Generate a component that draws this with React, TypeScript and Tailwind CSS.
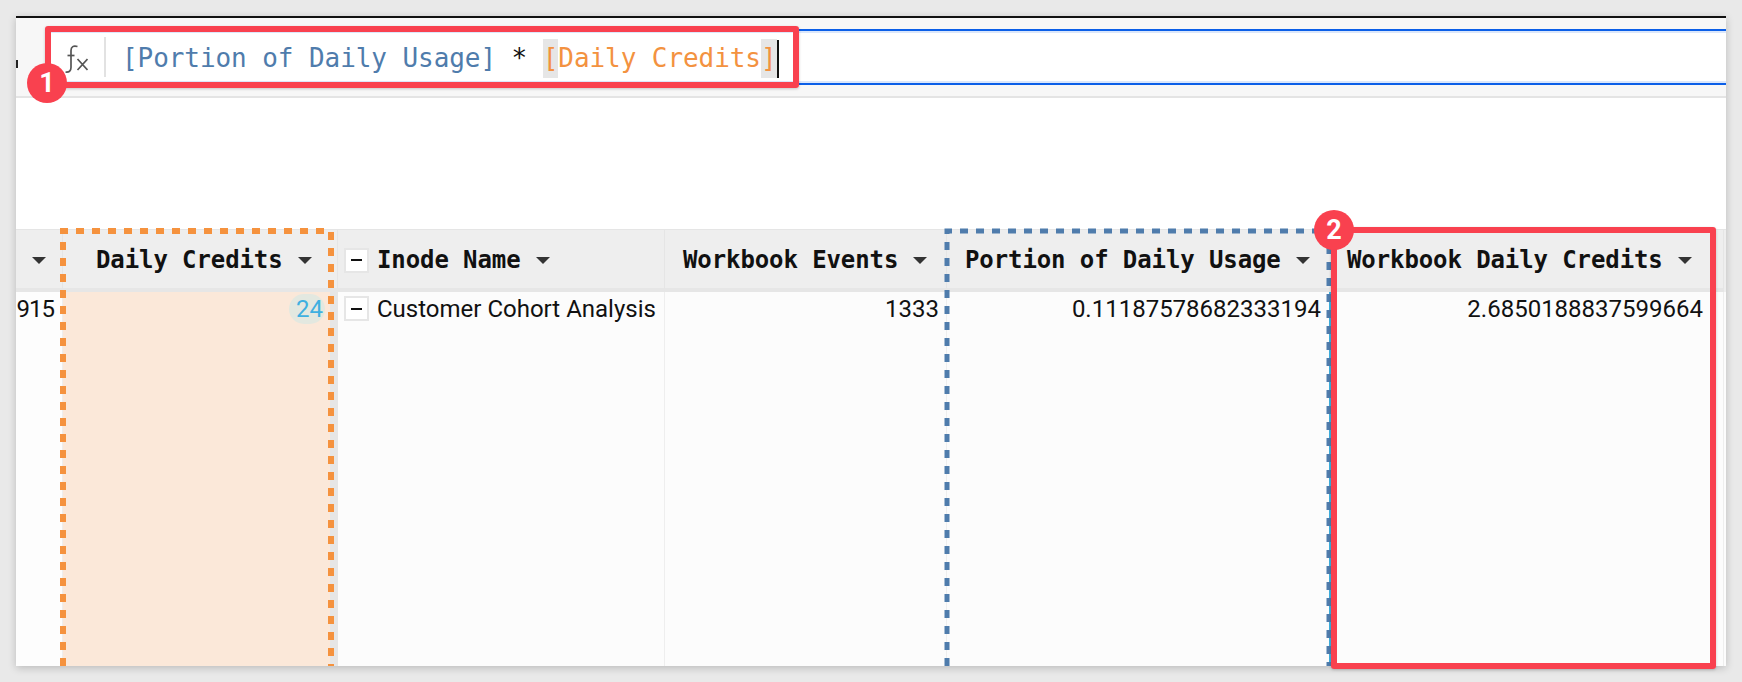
import { ReactNode } from 'react';

const mono = "font-['DejaVu_Sans_Mono','Liberation_Mono',monospace]";

function Caret() {
  return <span className="inline-block w-0 h-0 border-x-[7px] border-x-transparent border-t-[7px] border-t-[#333] shrink-0" />;
}

function MinusBox() {
  return (
    <span className="flex items-center justify-center w-[25px] h-[25px] bg-white border-2 border-[#e6e6e6] shrink-0">
      <span className="block w-[11px] h-[2px] bg-[#111]" />
    </span>
  );
}

function HeadCell({ label, className }: { label: string; className: string }) {
  return (
    <div className={`flex items-center pt-[2px] bg-[#eeeeee] border-r border-[#e5e5e5] border-b-4 border-b-[#e6e6e6] ${className}`}>
      <span className={`${mono} font-bold text-[24px] tracking-[-0.1px] text-[#111] whitespace-nowrap`}>{label}</span>
      <span className="ml-[15px] flex"><Caret /></span>
    </div>
  );
}

function BodyCell({ children, className }: { children?: ReactNode; className: string }) {
  return (
    <div className={`flex items-start text-[24px] leading-[34px] text-[#111] border-r border-[#eeeeee] ${className}`}>
      {children}
    </div>
  );
}

function FxIcon() {
  return (
    <svg width="24" height="30" viewBox="0 0 24 30" fill="none" stroke="#555" strokeWidth="1.7" className="shrink-0 mt-[3px]">
      <path d="M13.500 2.500c-4-1-6.500 0-6.500 4v17c0 3.500-2 5-5.500 4.500" />
      <path d="M3.500 11.500h7" />
      <path d="M13.500 15l10 11M23.500 15l-10 11" />
    </svg>
  );
}

function DashFrame({ x1, x2, color, w }: { x1: number; x2: number; color: string; w: number }) {
  // open at the bottom, the frame runs down past the table
  const top = 231;
  const bottom = 666;
  return (
    <svg width="1742" height="682" className="absolute left-0 top-0 pointer-events-none">
      <path
        d={`M${x1} ${bottom}V${top}H${x2}V${bottom}`}
        fill="none"
        stroke={color}
        strokeWidth={w}
        strokeDasharray="8 8"
      />
    </svg>
  );
}

function Badge({ n, className }: { n: string; className: string }) {
  return (
    <div className={`absolute w-[40px] h-[40px] rounded-full bg-[#f9414f] text-white flex items-center justify-center font-['Roboto',sans-serif] font-bold text-[27px] ${className}`}>
      {n}
    </div>
  );
}

export default function App() {
  return (
    <div className="relative w-[1742px] h-[682px] overflow-hidden bg-[#e9e9e9] px-[16px] pt-[16px] font-['Roboto',sans-serif]">
      <div className="flex flex-col w-[1710px] h-[650px] bg-white border-t-2 border-[#111] shadow-[0_2px_8px_rgba(0,0,0,0.2)]">
        {/* formula bar */}
        <div className="flex flex-col h-[80px] pt-[11px] pl-[30px] bg-[#f7f7f7] border-b-2 border-[#e4e4e4] shrink-0">
          <div className="flex items-center h-[56px] pl-[18px] bg-white border-y-2 border-[#0b5fe8] shadow-[inset_0_2px_0_#dbe7fb,inset_0_-2px_0_#dbe7fb]">
            <FxIcon />
            <div className="w-[2px] h-[40px] bg-[#e2e2e2] ml-[16px] mr-[16px]" />
            <div className={`${mono} text-[26px] tracking-[-0.07px] mt-[3px] whitespace-pre flex items-center`}>
              <span className="text-[#4f7cac]">[Portion of Daily Usage]</span>
              <span className="text-[#111]"> * </span>
              <span className="text-[#f39240] bg-[#e6e6e6]">[</span>
              <span className="text-[#f39240]">Daily Credits</span>
              <span className="text-[#f39240] bg-[#e6e6e6]">]</span>
              <span className="w-[2px] h-[38px] bg-[#111]" />
            </div>
          </div>
        </div>

        <div className="h-[131px] bg-white shrink-0" />

        {/* table */}
        <div className="grid grid-cols-[47px_275px_327px_282px_384px_393px_2px] grid-rows-[62px_1fr] flex-1 border-t border-[#e5e5e5]">
          <HeadCell label="" className="justify-end pr-[16px]" />
          <HeadCell label="Daily Credits" className="pl-[33px]" />
          <div className="flex items-center pt-[2px] pl-[6px] bg-[#eeeeee] border-r border-[#e5e5e5] border-b-4 border-b-[#e6e6e6]">
            <MinusBox />
            <span className={`${mono} font-bold text-[24px] tracking-[-0.1px] text-[#111] ml-[8px]`}>Inode Name</span>
            <span className="ml-[15px] flex"><Caret /></span>
          </div>
          <HeadCell label="Workbook Events" className="pl-[18px]" />
          <HeadCell label="Portion of Daily Usage" className="pl-[18px]" />
          <HeadCell label="Workbook Daily Credits" className="pl-[16px]" />
          <div className="bg-[#eeeeee]" />

          <BodyCell className="bg-[#fdfdfd] justify-end pr-[8px] tracking-[-1px]">915</BodyCell>
          <div className="flex items-start justify-end pt-[2px] pr-[5px] bg-[#fbe8d9] border-r-[8px] border-[#e6e6e6]">
            <span className="w-[36px] h-[30px] flex items-center justify-end pr-[2px] rounded-full bg-[#e3e8e0] text-[#3fb0e0] text-[24px]">24</span>
          </div>
          <BodyCell className="bg-[#fcfcfc] pl-[6px] whitespace-nowrap">
            <span className="mt-[4px]"><MinusBox /></span>
            <span className="ml-[8px]">Customer Cohort Analysis</span>
          </BodyCell>
          <BodyCell className="bg-[#fcfcfc] justify-end pr-[7px]">1333</BodyCell>
          <BodyCell className="bg-[#fcfcfc] justify-end pr-[8px] border-r-2 border-r-[#3fb0e0]">0.11187578682333194</BodyCell>
          <BodyCell className="bg-[#fcfcfc] justify-end pr-[20px]">2.6850188837599664</BodyCell>
          <div className="bg-[#fcfcfc]" />
        </div>
      </div>

      {/* annotations on top of the screenshot */}
      <div className="absolute left-[16px] top-[60px] w-[2px] h-[8px] bg-[#222]" />
      <DashFrame x1={63} x2={331} color="#f5923e" w={6} />
      <DashFrame x1={947} x2={1329} color="#4f7cac" w={5} />
      <div className="absolute left-[45px] top-[26px] w-[754px] h-[62px] border-[6px] border-[#f9414f] rounded-[3px] shadow-[0_1px_3px_rgba(0,0,0,0.2)]" />
      <div className="absolute left-[1331px] top-[227px] w-[385px] h-[442px] border-[6px] border-[#f9414f] rounded-[3px] shadow-[0_1px_3px_rgba(0,0,0,0.2)]" />
      <Badge n="1" className="left-[27px] top-[63px]" />
      <Badge n="2" className="left-[1314px] top-[210px]" />
    </div>
  );
}
